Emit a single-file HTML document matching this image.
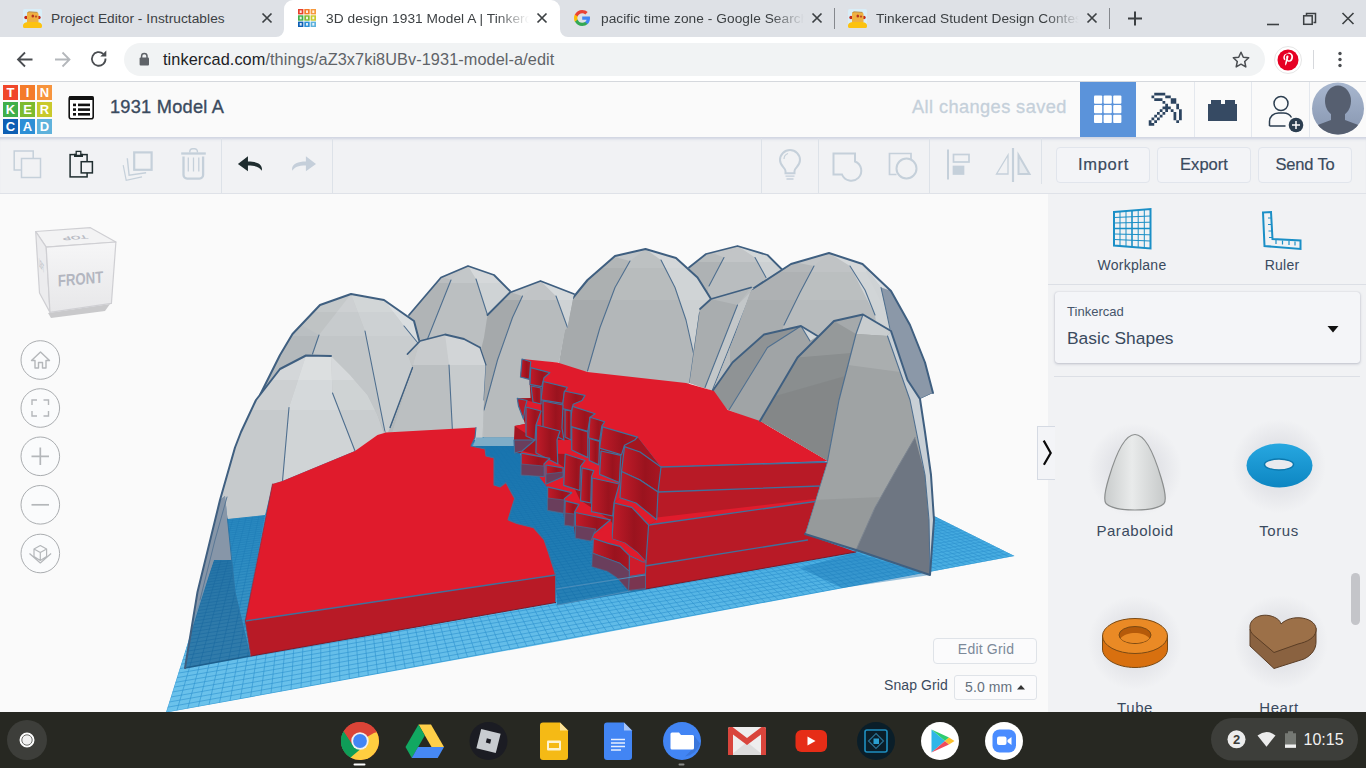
<!DOCTYPE html>
<html lang="en">
<head>
<meta charset="utf-8">
<title>3D design 1931 Model A | Tinkercad</title>
<style>
*{box-sizing:border-box;margin:0;padding:0}
html,body{width:1366px;height:768px;overflow:hidden;background:#fafafa;font-family:"Liberation Sans",sans-serif}
.abs{position:absolute}
#tabstrip{left:0;top:0;width:1366px;height:37px;background:#dee1e6}
#navbar{left:0;top:37px;width:1366px;height:45px;background:#fff;border-bottom:1px solid #d5d8dd}
.tabtxt{position:absolute;top:10.5px;font-size:13.7px;color:#3c4043;white-space:nowrap;overflow:hidden;letter-spacing:0.06px}
#omni{left:124px;top:43px;width:1141px;height:33px;border-radius:17px;background:#f1f3f4}
#url{left:163px;top:50px;font-size:16.3px;color:#5f6368;white-space:nowrap;letter-spacing:0.08px}
#url b{font-weight:normal;color:#202124}
#tkhead{left:0;top:82px;width:1366px;height:55px;background:#fafafa}
#tkbar{left:0;top:137px;width:1366px;height:57px;background:#f1f2f4;border-bottom:1px solid #dfe2e8;box-shadow:inset 0 4px 3px -2px rgba(176,184,208,.55)}
#view{left:0;top:194px;width:1048px;height:518px;background:#fafafa}
#panel{left:1048px;top:194px;width:318px;height:518px;background:#f1f2f4}
#shelf{left:0;top:712px;width:1366px;height:56px;background:#272822}
.tk{font-family:"Liberation Sans",sans-serif;color:#3a4a5e}
.btn{position:absolute;top:147px;width:94px;height:36px;border:1px solid #e1e5ec;border-radius:4px;background:#f3f4f7;font-size:16.5px;color:#3a4a5e;text-align:center;line-height:33px;-webkit-text-stroke:0.2px #3a4a5e}
.vsep{position:absolute;top:138px;width:1px;height:55px;background:#dde2e8}
.hsep{position:absolute;top:82px;width:1px;height:55px;background:#e4e8ee}
.logo i{position:absolute;width:15px;height:15px;font-style:normal;font-weight:bold;font-size:13px;line-height:15px;text-align:center;color:#fff}
.circ{position:absolute;left:21px;width:39px;height:39px;border-radius:50%;border:1px solid #b9bdc1;background:#fafbfc}
.lbl{position:absolute;font-size:14px;color:#3a4a5e;text-align:center;letter-spacing:0.25px;white-space:nowrap}
</style>
</head>
<body>
<!-- ===== browser tab strip ===== -->
<div id="tabstrip" class="abs"></div>
<div class="abs" style="left:284px;top:0;width:276px;height:37px;background:#fff;border-radius:9px 9px 0 0"></div>
<svg class="abs" style="left:276px;top:29px" width="8" height="8"><path d="M8 0 V8 H0 A8 8 0 0 0 8 0Z" fill="#fff"/></svg>
<svg class="abs" style="left:560px;top:29px" width="8" height="8"><path d="M0 0 V8 H8 A8 8 0 0 1 0 0Z" fill="#fff"/></svg>
<div class="tabtxt" style="left:51px;width:200px">Project Editor - Instructables</div>
<div class="tabtxt" style="left:326px;width:203px;-webkit-mask-image:linear-gradient(90deg,#000 170px,transparent 203px)">3D design 1931 Model A | Tinkercad</div>
<div class="tabtxt" style="left:601px;width:203px;-webkit-mask-image:linear-gradient(90deg,#000 170px,transparent 203px)">pacific time zone - Google Search</div>
<div class="tabtxt" style="left:876px;width:203px;-webkit-mask-image:linear-gradient(90deg,#000 170px,transparent 203px)">Tinkercad Student Design Contest</div>
<svg class="abs" style="left:0;top:0" width="1366" height="37" viewBox="0 0 1366 37">
  <!-- favicons -->
  <g id="robot1">
    <rect x="23" y="9" width="19" height="19" rx="1.500" fill="#d9eef8"/>
    <circle cx="26" cy="17.500" r="1.700" fill="#c2281c"/><circle cx="39" cy="17.500" r="1.700" fill="#c2281c"/>
    <path d="M27 13.500q0-1.500 1.500-1.500l8.500.600q1.500.100 1.500 1.600v7.800h-11.500z" fill="#efb042"/>
    <path d="M27.500 12.600l1.500-.800 8.500.600" stroke="#b07a25" stroke-width="0.800" fill="none"/>
    <ellipse cx="32.800" cy="16" rx="1.300" ry="1.600" fill="#b5331e"/><ellipse cx="36" cy="16.600" rx="1.200" ry="1.100" fill="#c0502a"/>
    <path d="M23 25.500q0-3 4.500-3.500h10q4.500.500 4.500 3.500v1a1.500 1.500 0 0 1-1.500 1.500h-16a1.500 1.500 0 0 1-1.500-1.500z" fill="#fcc210"/>
  </g>
  <use href="#robot1" x="825"/>
  <g>
    <rect x="298" y="9" width="5.4" height="5.4" fill="#e8412c"/><rect x="304.3" y="9" width="5.4" height="5.4" fill="#f47b2b"/><rect x="310.6" y="9" width="5.4" height="5.4" fill="#f79a3e"/>
    <rect x="298" y="15.3" width="5.4" height="5.4" fill="#3fae49"/><rect x="304.3" y="15.3" width="5.4" height="5.4" fill="#7dbb2f"/><rect x="310.6" y="15.3" width="5.4" height="5.4" fill="#c9c92c"/>
    <rect x="298" y="21.6" width="5.4" height="5.4" fill="#0e5fb4"/><rect x="304.3" y="21.6" width="5.4" height="5.4" fill="#2d8fd6"/><rect x="310.6" y="21.6" width="5.4" height="5.4" fill="#5fb2dc"/>
    <rect x="299.7" y="10.4" width="2" height="2.600" fill="#fff" opacity="0.85"/><rect x="306.0" y="10.4" width="2" height="2.600" fill="#fff" opacity="0.85"/><rect x="312.3" y="10.4" width="2" height="2.600" fill="#fff" opacity="0.85"/><rect x="299.7" y="16.7" width="2" height="2.600" fill="#fff" opacity="0.85"/><rect x="306.0" y="16.7" width="2" height="2.600" fill="#fff" opacity="0.85"/><rect x="312.3" y="16.7" width="2" height="2.600" fill="#fff" opacity="0.85"/><rect x="299.7" y="23.0" width="2" height="2.600" fill="#fff" opacity="0.85"/><rect x="306.0" y="23.0" width="2" height="2.600" fill="#fff" opacity="0.85"/><rect x="312.3" y="23.0" width="2" height="2.600" fill="#fff" opacity="0.85"/>
  </g>
  <g transform="translate(574,10)">
    <path d="M16 8.2c0-.6-.05-1.1-.15-1.6H8.2v3.1h4.4c-.2 1-.77 1.85-1.63 2.42v2h2.63C15.14 12.7 16 10.65 16 8.2z" fill="#4285f4"/>
    <path d="M8.2 16c2.2 0 4.05-.73 5.4-1.98l-2.63-2c-.73.5-1.67.78-2.77.78-2.13 0-3.93-1.44-4.58-3.37H.9v2.1C2.25 14.2 5 16 8.2 16z" fill="#34a853"/>
    <path d="M3.62 9.43c-.16-.5-.26-1-.26-1.53s.1-1.04.26-1.53v-2.1H.9C.33 5.4 0 6.66 0 8s.33 2.6.9 3.73l2.72-2.3z" fill="#fbbc05"/>
    <path d="M8.2 3.2c1.2 0 2.28.4 3.13 1.22l2.34-2.34C12.25.75 10.4 0 8.2 0 5 0 2.25 1.8.9 4.47l2.72 2.1C4.27 4.64 6.07 3.2 8.2 3.2z" fill="#ea4335"/>
  </g>
  <!-- close x -->
  <g stroke="#3c4043" stroke-width="1.7" fill="none">
    <path d="M262.5 13.5l9 9m0-9l-9 9"/><path d="M537.5 13.5l9 9m0-9l-9 9"/><path d="M812.5 13.5l9 9m0-9l-9 9"/><path d="M1087.5 13.5l9 9m0-9l-9 9"/>
  </g>
  <!-- tab separators -->
  <rect x="834" y="8" width="1" height="21" fill="#85888d"/><rect x="1109" y="8" width="1" height="21" fill="#85888d"/>
  <!-- new tab plus -->
  <path d="M1128 18.5h14M1135 11.5v14" stroke="#3c4043" stroke-width="2" fill="none"/>
  <!-- window controls -->
  <path d="M1267 24.5h12" stroke="#3c4043" stroke-width="1.6" fill="none"/>
  <path d="M1306.5 15.5v-2h9v9h-2" stroke="#3c4043" stroke-width="1.5" fill="none"/>
  <rect x="1303.700" y="15.800" width="8.500" height="8.500" stroke="#3c4043" stroke-width="1.500" fill="none"/>
  <path d="M1342.500 13l11 11m0-11l-11 11" stroke="#3c4043" stroke-width="1.6" fill="none"/>
</svg>
<!-- ===== nav bar ===== -->
<div id="navbar" class="abs"></div>
<div id="omni" class="abs"></div>
<div id="url" class="abs"><b>tinkercad.com</b>/things/aZ3x7ki8UBv-1931-model-a/edit</div>
<svg class="abs" style="left:0;top:37px" width="1366" height="45" viewBox="0 37 1366 45">
  <path d="M32.500 59.500H18.500M25 52.500l-7 7 7 7" stroke="#4a4d51" stroke-width="1.800" fill="none"/>
  <path d="M55 59.500h14M62.500 52.500l7 7-7 7" stroke="#b4b7bb" stroke-width="1.800" fill="none"/>
  <path d="M105.500 58.500a6.800 6.800 0 1 1-2.200-4.600" stroke="#4a4d51" stroke-width="1.800" fill="none"/>
  <path d="M106.300 50.500v6h-6z" fill="#4a4d51"/>
  <rect x="139.600" y="57.600" width="9.400" height="7.800" rx="1" fill="#5f6368"/>
  <path d="M141.600 58v-1.900a2.700 2.700 0 0 1 5.400 0v1.900" stroke="#5f6368" stroke-width="1.500" fill="none"/>
  <path d="M1241 52.200l2.300 5 5.400.6-4 3.700 1.100 5.400-4.800-2.700-4.800 2.700 1.100-5.400-4-3.700 5.400-.6z" stroke="#4a4d51" stroke-width="1.500" fill="none" stroke-linejoin="round"/>
  <circle cx="1288" cy="60" r="13.500" fill="#fff" stroke="#e6e6e6" stroke-width="1"/>
  <circle cx="1288" cy="60" r="10.500" fill="#e60023"/>
  <path d="M1288.300 53.200c-3.300 0-5 2.200-5 4.300 0 1.200.5 2.300 1.500 2.700.2.100.3 0 .4-.2l.2-.7c0-.2 0-.3-.1-.5-.3-.4-.5-.9-.5-1.600 0-2 1.500-3.400 3.500-3.400 1.900 0 3 1.200 3 2.800 0 2.100-.9 3.900-2.300 3.900-.8 0-1.300-.6-1.100-1.400.2-.9.600-1.900.6-2.600 0-.6-.3-1.100-1-1.100-.8 0-1.400.8-1.400 1.900 0 .7.200 1.200.2 1.200l-1 4.100c-.3 1.200 0 2.700 0 2.800 0 .1.100.1.200 0 .1-.1 1-1.300 1.300-2.500l.5-2c.3.500 1 .9 1.800.9 2.400 0 4-2.200 4-5.100 0-2.200-1.900-4.200-4.800-4.200z" fill="#fff"/>
  <rect x="1313" y="50" width="1" height="19" fill="#d6d8dc"/>
  <circle cx="1340" cy="53.500" r="1.700" fill="#4a4d51"/><circle cx="1340" cy="59.500" r="1.700" fill="#4a4d51"/><circle cx="1340" cy="65.500" r="1.700" fill="#4a4d51"/>
</svg>
<!-- ===== tinkercad header ===== -->
<div id="tkhead" class="abs"></div>
<div class="abs logo" style="left:3px;top:85px;width:49px;height:49px">
  <i style="left:0;top:0;background:#f0462a">T</i><i style="left:17px;top:0;background:#f47b2b">I</i><i style="left:34px;top:0;background:#f7943e">N</i>
  <i style="left:0;top:17px;background:#3fae49">K</i><i style="left:17px;top:17px;background:#7dbb2f">E</i><i style="left:34px;top:17px;background:#c9c92c">R</i>
  <i style="left:0;top:34px;background:#0e5fb4">C</i><i style="left:17px;top:34px;background:#2d8fd6">A</i><i style="left:34px;top:34px;background:#5fb2dc">D</i>
</div>
<svg class="abs" style="left:66px;top:94px" width="30" height="28" viewBox="66 94 30 28">
  <rect x="69.200" y="96.900" width="24" height="21.800" rx="2" fill="#fff" stroke="#111" stroke-width="1.600"/>
  <rect x="69" y="96.300" width="24.500" height="3.700" fill="#111"/>
  <rect x="73" y="103.600" width="3" height="2.600" fill="#111"/><rect x="78" y="103.600" width="12" height="2.600" fill="#111"/>
  <rect x="73" y="108.300" width="3" height="2.600" fill="#111"/><rect x="78" y="108.300" width="12" height="2.600" fill="#111"/>
  <rect x="73" y="113" width="3" height="2.600" fill="#111"/><rect x="78" y="113" width="12" height="2.600" fill="#111"/>
</svg>
<div class="abs tk" style="left:110px;top:97px;font-size:18.2px;letter-spacing:0.25px;white-space:nowrap;-webkit-text-stroke:0.35px #3a4a5e">1931 Model A</div>
<div class="abs" style="left:912px;top:97px;font-size:18.2px;letter-spacing:0.42px;color:#c5d0da;white-space:nowrap;-webkit-text-stroke:0.3px #c5d0da">All changes saved</div>
<div class="abs" style="left:1080px;top:82px;width:56px;height:55px;background:#5b93da"></div>
<div class="hsep" style="left:1194px"></div><div class="hsep" style="left:1251px"></div><div class="hsep" style="left:1309px"></div>
<svg class="abs" style="left:1080px;top:82px" width="286" height="55" viewBox="1080 82 286 55">
  <g fill="#fff">
    <rect x="1094" y="95.500" width="8.200" height="8.200" rx="1"/><rect x="1103.600" y="95.500" width="8.200" height="8.200" rx="1"/><rect x="1113.200" y="95.500" width="8.200" height="8.200" rx="1"/>
    <rect x="1094" y="105.100" width="8.200" height="8.200" rx="1"/><rect x="1103.600" y="105.100" width="8.200" height="8.200" rx="1"/><rect x="1113.200" y="105.100" width="8.200" height="8.200" rx="1"/>
    <rect x="1094" y="114.700" width="8.200" height="8.200" rx="1"/><rect x="1103.600" y="114.700" width="8.200" height="8.200" rx="1"/><rect x="1113.200" y="114.700" width="8.200" height="8.200" rx="1"/>
  </g>
  <!-- pickaxe -->
  <path d="M1154.25 92.77h2.75v2.75h-2.75zM1157.00 92.77h2.75v2.75h-2.75zM1159.76 92.77h2.75v2.75h-2.75zM1162.51 92.77h2.75v2.75h-2.75zM1151.49 95.52h2.75v2.75h-2.75zM1165.26 95.52h2.75v2.75h-2.75zM1168.02 95.52h2.75v2.75h-2.75zM1154.25 98.28h2.75v2.75h-2.75zM1157.00 98.28h2.75v2.75h-2.75zM1159.76 98.28h2.75v2.75h-2.75zM1170.77 98.28h2.75v2.75h-2.75zM1173.53 98.28h2.75v2.75h-2.75zM1162.51 101.03h2.75v2.75h-2.75zM1170.77 101.03h2.75v2.75h-2.75zM1173.53 101.03h2.75v2.75h-2.75zM1165.26 103.79h2.75v2.75h-2.75zM1176.28 103.79h2.75v2.75h-2.75zM1162.51 106.54h2.75v2.75h-2.75zM1165.26 106.54h2.75v2.75h-2.75zM1168.02 106.54h2.75v2.75h-2.75zM1176.28 106.54h2.75v2.75h-2.75zM1159.76 109.29h2.75v2.75h-2.75zM1165.26 109.29h2.75v2.75h-2.75zM1170.77 109.29h2.75v2.75h-2.75zM1179.03 109.29h2.75v2.75h-2.75zM1157.00 112.05h2.75v2.75h-2.75zM1162.51 112.05h2.75v2.75h-2.75zM1173.53 112.05h2.75v2.75h-2.75zM1179.03 112.05h2.75v2.75h-2.75zM1154.25 114.80h2.75v2.75h-2.75zM1159.76 114.80h2.75v2.75h-2.75zM1173.53 114.80h2.75v2.75h-2.75zM1179.03 114.80h2.75v2.75h-2.75zM1151.49 117.56h2.75v2.75h-2.75zM1157.00 117.56h2.75v2.75h-2.75zM1173.53 117.56h2.75v2.75h-2.75zM1179.03 117.56h2.75v2.75h-2.75zM1148.74 120.31h2.75v2.75h-2.75zM1154.25 120.31h2.75v2.75h-2.75zM1176.28 120.31h2.75v2.75h-2.75zM1148.74 123.06h2.75v2.75h-2.75zM1151.49 123.06h2.75v2.75h-2.75z" fill="#2c4460"/>
  <!-- brick -->
  <path d="M1208 121V104h3v-4h10v4h4v-4h10v4h2v17z" fill="#364a63"/>
  <!-- person + -->
  <circle cx="1281" cy="103.500" r="7" stroke="#2c3e50" stroke-width="1.500" fill="none"/>
  <path d="M1269.500 126v-4.500c0-5 4-8.500 9-8.500h5c3.500 0 6.500 1.800 8 4.500" stroke="#2c3e50" stroke-width="1.500" fill="none"/>
  <path d="M1269.500 126h16" stroke="#2c3e50" stroke-width="1.500"/>
  <circle cx="1296" cy="125" r="7.300" fill="#2c3e50"/>
  <path d="M1292 125h8M1296 121v8" stroke="#fff" stroke-width="1.500"/>
  <!-- avatar -->
  <defs><clipPath id="avc"><circle cx="1338" cy="108.500" r="26"/></clipPath>
  <linearGradient id="avg" x1="0" y1="0" x2="0" y2="1"><stop offset="0" stop-color="#a8b7cf"/><stop offset="1" stop-color="#8796b0"/></linearGradient></defs>
  <circle cx="1338" cy="108.500" r="26" fill="url(#avg)"/>
  <g clip-path="url(#avc)" fill="#565f70">
    <ellipse cx="1338" cy="101" rx="13" ry="15.500"/>
    <path d="M1331 110h14v10l16 6v12h-46v-12l16-6z"/>
  </g>
</svg>
<!-- ===== tinkercad toolbar ===== -->
<div id="tkbar" class="abs"></div>
<div class="vsep" style="left:221px"></div><div class="vsep" style="left:332px"></div>
<div class="vsep" style="left:761px"></div><div class="vsep" style="left:818px"></div><div class="vsep" style="left:929px"></div><div class="vsep" style="left:1041px;height:46px"></div>
<svg class="abs" style="left:0;top:138px" width="1048" height="55" viewBox="0 138 1048 55">
  <g stroke="#c5d0da" fill="none" stroke-width="1.500">
    <rect x="14.200" y="151" width="19" height="19"/><rect x="21.500" y="158.500" width="19" height="19" fill="#f1f2f4"/>
    <!-- duplicate -->
    <path d="M123.200 165.200l3 15.200 15.800-3.500" stroke-width="1.200"/><path d="M127.300 158.200l1.800 16.900 17-2.300" stroke-width="1.400"/>
    <rect x="134.200" y="152.400" width="17.400" height="17.400" fill="#f1f2f4" stroke-width="2.200"/>
    <!-- trash -->
    <path d="M181.200 153.500h24.600" stroke-width="2.300"/><path d="M189.800 152.500v-1a2.800 2.800 0 0 1 2.800-2.800h2a2.800 2.800 0 0 1 2.800 2.800v1" stroke-width="1.400"/>
    <path d="M183.500 156.500v18.500a3.600 3.600 0 0 0 3.600 3.600h12.400a3.600 3.600 0 0 0 3.600-3.600v-18.500" stroke-width="2.300"/>
    <path d="M188.300 157.500v14M193.500 157.500v14M198.800 157.500v14" stroke-width="1.300"/>
  </g>
  <!-- paste -->
  <g stroke="#1f2d2f" fill="none" stroke-width="1.500">
    <rect x="70.100" y="154.600" width="17" height="22.300"/>
    <rect x="74" y="153.800" width="9" height="3.200" fill="#1f2d2f" stroke="none"/>
    <rect x="76.200" y="151.400" width="4.600" height="4" fill="#f1f2f4" stroke-width="1.300"/>
    <rect x="81.200" y="161.700" width="11.200" height="11.200" fill="#f1f2f4"/>
  </g>
  <!-- undo -->
  <path d="M237.900 163.900L247.950 156.300V161.500C256 161.500 261.500 163.500 262 169L261.600 170.800C259.500 167 256 165.600 247.950 165.500V171.200Z" fill="#1f2d2f"/>
  <path d="M316 163.900L305.900 156.300V161.500C298 161.500 292.500 163.500 292 169L292.400 170.800C294.500 167 298 165.600 305.900 165.500V171.200Z" fill="#c5cfda"/>
  <g stroke="#c5d0da" fill="none" stroke-width="2">
    <!-- bulb -->
    <path d="M785.500 173.300v-2.300c0-3-5.500-5-5.500-11a10 10 0 0 1 20 0c0 6-5.500 8-5.500 11v2.300z" />
    <path d="M785.500 176.200h9M786.500 179h7" stroke-width="1.300"/>
    <path d="M784 159a6 6 0 0 1 4-5.500" stroke-width="1.200"/>
    <!-- group -->
    <path d="M855 153.500h-21.500v21h8.500a10 10 0 1 0 13-13z" />
    <!-- ungroup -->
    <path d="M911 160v-6.500h-21.500v21h7" stroke-width="1.700"/><circle cx="906.500" cy="168.500" r="10"/>
    <!-- align -->
    <path d="M948 149.500v30" /><rect x="953.500" y="154.500" width="15.500" height="7.500" stroke-width="1.700"/><rect x="953.500" y="166.500" width="10" height="7.500" fill="#c5d0da" stroke-width="1.700"/>
    <!-- mirror -->
    <path d="M1013 148v34" stroke-width="2.200"/><path d="M1008 155v19h-11.500z" stroke-width="1.300"/><path d="M1018.500 155v19h11z" stroke-width="2" fill="#e6eaee"/>
  </g>
</svg>
<div class="btn" style="left:1056px;letter-spacing:0.73px;padding-left:1px">Import</div><div class="btn" style="left:1157px;letter-spacing:0.03px">Export</div><div class="btn" style="left:1258px;letter-spacing:-0.2px">Send To</div>
<!-- ===== viewport ===== -->
<div id="view" class="abs"></div>
<!--SCENE-START-->
<svg class="abs" style="left:0;top:194px" width="1048" height="518" viewBox="0 194 1048 518">
<clipPath id="cwp"><polygon points="166,712.5 560,641 1014.5,556 701,400 251.6,440"/></clipPath>
<defs><linearGradient id="wpg" gradientUnits="userSpaceOnUse" x1="0" y1="712" x2="0" y2="430"><stop offset="0" stop-color="#6cc3ec"/><stop offset="0.3" stop-color="#62bce8"/><stop offset="0.55" stop-color="#48ade1"/><stop offset="1" stop-color="#3399d6"/></linearGradient></defs>
<polygon points="166,712.5 560,641 1014.5,556 701,400 251.6,440" fill="url(#wpg)" />
<path clip-path="url(#cwp)" d="M166 712.5L251.6 440M166 712.5L1014.5 556M176.9 710.5L256.4 439.6M167.7 707.2L1009.4 553.5M187.7 708.5L261.2 439.1M169.3 702L1004.4 551M198.4 706.5L266 438.7M170.9 697L999.5 548.5M209 704.6L270.7 438.3M172.4 692L994.6 546.1M219.5 702.6L275.5 437.9M174 687.1L989.8 543.7M230 700.7L280.2 437.5M175.5 682.4L985.1 541.4M240.3 698.8L284.9 437M176.9 677.7L980.4 539M250.6 696.9L289.6 436.6M178.4 673.1L975.8 536.8M260.8 695L294.3 436.2M179.8 668.6L971.3 534.5M271 693.1L298.9 435.8M181.2 664.2L966.8 532.3M281.1 691.3L303.6 435.4M182.5 659.9L962.4 530.1M291 689.4L308.2 435M183.8 655.7L958.1 527.9M301 687.6L312.8 434.6M185.2 651.5L953.8 525.8M310.8 685.8L317.4 434.1M186.4 647.4L949.5 523.7M320.6 684L322 433.7M187.7 643.4L945.4 521.6M330.3 682.2L326.5 433.3M188.9 639.5L941.2 519.5M339.9 680.4L331.1 432.9M190.1 635.6L937.2 517.5M349.4 678.7L335.6 432.5M191.3 631.9L933.2 515.5M358.9 676.9L340.1 432.1M192.5 628.1L929.2 513.6M368.3 675.2L344.6 431.7M193.7 624.5L925.3 511.6M377.7 673.5L349.1 431.3M194.8 620.9L921.4 509.7M386.9 671.7L353.6 430.9M195.9 617.3L917.6 507.8M396.2 670L358 430.5M197 613.9L913.8 505.9M405.3 668.4L362.5 430.1M198.1 610.5L910.1 504.1M414.4 666.7L366.9 429.7M199.1 607.1L906.5 502.2M423.4 665L371.3 429.3M200.1 603.8L902.8 500.4M432.3 663.4L375.7 429M201.2 600.5L899.3 498.7M441.2 661.7L380 428.6M202.2 597.4L895.7 496.9M450.1 660.1L384.4 428.2M203.2 594.2L892.2 495.2M458.8 658.5L388.8 427.8M204.1 591.1L888.8 493.4M467.5 656.9L393.1 427.4M205.1 588.1L885.4 491.7M476.2 655.3L397.4 427M206 585.1L882 490.1M484.7 653.7L401.7 426.6M206.9 582.1L878.7 488.4M493.3 652.1L406 426.3M207.9 579.3L875.4 486.8M501.7 650.6L410.3 425.9M208.8 576.4L872.1 485.2M510.1 649L414.5 425.5M209.6 573.6L868.9 483.6M518.5 647.5L418.8 425.1M210.5 570.8L865.8 482M526.8 646L423 424.7M211.4 568.1L862.6 480.4M535 644.4L427.2 424.4M212.2 565.4L859.5 478.9M543.2 642.9L431.4 424M213 562.8L856.5 477.4M551.3 641.4L435.6 423.6M213.9 560.2L853.4 475.9M559.3 640L439.8 423.3M214.7 557.6L850.4 474.4M567.4 638.5L443.9 422.9M215.5 555.1L847.5 472.9M575.3 637L448.1 422.5M216.2 552.6L844.5 471.4M583.2 635.5L452.2 422.1M217 550.1L841.6 470M591.1 634.1L456.3 421.8M217.8 547.7L838.8 468.6M598.9 632.7L460.4 421.4M218.5 545.3L835.9 467.2M606.6 631.2L464.5 421M219.3 543L833.1 465.8M614.3 629.8L468.6 420.7M220 540.6L830.4 464.4M622 628.4L472.7 420.3M220.7 538.4L827.6 463M629.6 627L476.7 420M221.4 536.1L824.9 461.7M637.1 625.6L480.8 419.6M222.1 533.9L822.2 460.3M644.6 624.2L484.8 419.2M222.8 531.7L819.6 459M652 622.9L488.8 418.9M223.5 529.5L817 457.7M659.4 621.5L492.8 418.5M224.1 527.4L814.4 456.4M666.8 620.1L496.8 418.2M224.8 525.3L811.8 455.1M674.1 618.8L500.8 417.8M225.5 523.2L809.2 453.9M681.4 617.4L504.7 417.5M226.1 521.2L806.7 452.6M688.6 616.1L508.7 417.1M226.7 519.1L804.2 451.4M695.7 614.8L512.6 416.8M227.4 517.1L801.8 450.1M702.9 613.5L516.5 416.4M228 515.2L799.3 448.9M709.9 612.2L520.4 416.1M228.6 513.2L796.9 447.7M717 610.9L524.3 415.7M229.2 511.3L794.5 446.5M724 609.6L528.2 415.4M229.8 509.4L792.1 445.4M730.9 608.3L532.1 415M230.4 507.5L789.8 444.2M737.8 607L535.9 414.7M231 505.7L787.5 443M744.7 605.8L539.8 414.3M231.5 503.8L785.2 441.9M751.5 604.5L543.6 414M232.1 502L782.9 440.8M758.2 603.3L547.4 413.7M232.7 500.3L780.6 439.6M765 602L551.2 413.3M233.2 498.5L778.4 438.5M771.7 600.8L555 413M233.8 496.8L776.2 437.4M778.3 599.6L558.8 412.7M234.3 495L774 436.3M784.9 598.3L562.6 412.3M234.8 493.3L771.8 435.3M791.5 597.1L566.4 412M235.4 491.7L769.7 434.2M798 595.9L570.1 411.6M235.9 490L767.6 433.1M804.5 594.7L573.9 411.3M236.4 488.4L765.5 432.1M811 593.5L577.6 411M236.9 486.7L763.4 431M817.4 592.4L581.3 410.7M237.4 485.1L761.3 430M823.7 591.2L585 410.3M237.9 483.6L759.3 429M830.1 590L588.7 410M238.4 482L757.2 428M836.4 588.9L592.4 409.7M238.9 480.5L755.2 427M842.6 587.7L596 409.3M239.4 478.9L753.2 426M848.9 586.6L599.7 409M239.8 477.4L751.3 425M855 585.4L603.3 408.7M240.3 475.9L749.3 424M861.2 584.3L607 408.4M240.8 474.4L747.4 423.1M867.3 583.2L610.6 408M241.2 473L745.5 422.1M873.4 582L614.2 407.7M241.7 471.5L743.5 421.2M879.4 580.9L617.8 407.4M242.1 470.1L741.7 420.2M885.4 579.8L621.4 407.1M242.6 468.7L739.8 419.3M891.4 578.7L625 406.8M243 467.3L737.9 418.4M897.3 577.6L628.5 406.4M243.5 465.9L736.1 417.5M903.2 576.5L632.1 406.1M243.9 464.6L734.3 416.6M909.1 575.4L635.6 405.8M244.3 463.2L732.5 415.7M914.9 574.4L639.2 405.5M244.7 461.9L730.7 414.8M920.7 573.3L642.7 405.2M245.1 460.5L728.9 413.9M926.5 572.2L646.2 404.9M245.6 459.2L727.2 413M932.2 571.2L649.7 404.6M246 457.9L725.4 412.2M937.9 570.1L653.2 404.3M246.4 456.6L723.7 411.3M943.6 569.1L656.7 403.9M246.8 455.4L722 410.4M949.2 568L660.2 403.6M247.2 454.1L720.3 409.6M954.9 567L663.6 403.3M247.6 452.9L718.6 408.8M960.4 566L667.1 403M247.9 451.6L716.9 407.9M966 565L670.5 402.7M248.3 450.4L715.3 407.1M971.5 563.9L673.9 402.4M248.7 449.2L713.6 406.3M977 562.9L677.4 402.1M249.1 448L712 405.5M982.4 561.9L680.8 401.8M249.4 446.8L710.4 404.7M987.8 560.9L684.2 401.5M249.8 445.7L708.8 403.9M993.2 559.9L687.6 401.2M250.2 444.5L707.2 403.1M998.6 558.9L690.9 400.9M250.5 443.4L705.6 402.3M1003.9 558L694.3 400.6M250.9 442.2L704.1 401.5M1009.2 557L697.7 400.3M251.3 441.1L702.5 400.8M1014.5 556L701 400M251.6 440L701 400" stroke="#2f93cf" stroke-width="1" fill="none" opacity="0.62"/>
<polygon points="464,425 524,425 520,455 545,470 575,500 600,530 645,566 645,590 557,605 555,575 540,535 505,520 494,485 480,455" fill="#0a5f97" opacity="0.62"/>
<polygon points="800,568 855,552.5 930,575 842,588" fill="#1876b4" opacity="0.45"/>
<clipPath id="c1"><polygon points="689,267.5 706,254 737.5,246 767.5,255 782.5,270 800,330 690,330"/></clipPath>
<g clip-path="url(#c1)">
<polygon points="689,267.5 706,254 737.5,246 767.5,255 782.5,270 800,330 690,330" fill="#b9bdbf" />
<polygon points="680,240 724,257.5 709,286 700,330 680,330" fill="#aeb2b4" />
<polygon points="724,257.5 737.5,246 755,257.5 766,277.5 780,330 700,330 709,286" fill="#b9bdbf" />
<polygon points="737.5,246 767.5,255 790,270 800,330 780,330 766,277.5 755,257.5" fill="#cdd1d3" />
<polygon points="680,240 800,240 800,262 680,262" fill="#ffffff" opacity="0.13"/>
<polyline points="724,257.5 709,286" fill="none" stroke="#4f6f8f" stroke-width="1.1" stroke-linejoin="round" stroke-linecap="round" />
<polyline points="755,257.5 766,277.5" fill="none" stroke="#4f6f8f" stroke-width="1.1" stroke-linejoin="round" stroke-linecap="round" />
</g>
<polyline points="689,267.5 706,254 737.5,246 767.5,255 782.5,270" fill="none" stroke="#3f5f80" stroke-width="1.8" stroke-linejoin="round" stroke-linecap="round" />
<clipPath id="c2"><polygon points="405,320 409,315 441,277.5 468,266 494,275 510,291 520,375 405,375"/></clipPath>
<g clip-path="url(#c2)">
<polygon points="405,320 409,315 441,277.5 468,266 494,275 510,291 520,375 405,375" fill="#b9bdbf" />
<polygon points="400,260 451,280 427.5,339 415,380 400,380" fill="#b0b4b6" />
<polygon points="451,280 468,266 476,279 487.5,315 500,380 415,380 427.5,339" fill="#bbbfc1" />
<polygon points="468,266 494,275 515,291 525,380 500,380 487.5,315 476,279" fill="#cfd3d5" />
<polygon points="400,260 520,260 520,283 400,283" fill="#ffffff" opacity="0.13"/>
<polyline points="451,280 427.5,339" fill="none" stroke="#4f6f8f" stroke-width="1.1" stroke-linejoin="round" stroke-linecap="round" />
<polyline points="476,279 487.5,315" fill="none" stroke="#4f6f8f" stroke-width="1.1" stroke-linejoin="round" stroke-linecap="round" />
</g>
<polyline points="409,315 441,277.5 468,266 494,275 510,291" fill="none" stroke="#3f5f80" stroke-width="1.8" stroke-linejoin="round" stroke-linecap="round" />
<clipPath id="c3"><polygon points="752.5,289 791,264 829,253 862.5,264 891,291 910,325 925,362.5 933,393 920,399 880,420 700,420 735,310"/></clipPath>
<g clip-path="url(#c3)">
<polygon points="752.5,289 791,264 829,253 862.5,264 891,291 910,325 925,362.5 933,393 920,399 880,420 700,420 735,310" fill="#b9bdbf" />
<polygon points="730,250 814,266 784,325 760,420 730,420" fill="#a9adaf" />
<polygon points="814,266 829,253 850,266 875,315 890,420 760,420 784,325" fill="#b7bbbd" />
<polygon points="829,253 862.5,264 881,287.5 886,310 890,329 900,420 890,420 875,315 850,266" fill="#cfd3d5" />
<polygon points="862.5,264 891,291 881,287.5" fill="#d9dde0" />
<polygon points="881,287.5 891,291 910,325 925,362.5 933,393 920,399 907.5,380 891,331 886,310" fill="#8b98a8" />
<polygon points="730,250 880,250 866,272 730,272" fill="#ffffff" opacity="0.13"/>
<polygon points="730,272 866,272 880,300 730,300" fill="#ffffff" opacity="0.06"/>
<polyline points="814,266 800,292.5 784,325" fill="none" stroke="#4f6f8f" stroke-width="1.1" stroke-linejoin="round" stroke-linecap="round" />
<polyline points="850,266 865,290 875,315" fill="none" stroke="#4f6f8f" stroke-width="1.1" stroke-linejoin="round" stroke-linecap="round" />
<polyline points="881,287.5 886,310 890,329" fill="none" stroke="#4f6f8f" stroke-width="1.1" stroke-linejoin="round" stroke-linecap="round" />
<polyline points="920,399 933,393" fill="none" stroke="#4f6f8f" stroke-width="1.1" stroke-linejoin="round" stroke-linecap="round" />
</g>
<polyline points="752.5,289 791,264 829,253 862.5,264 891,291 910,325 925,362.5 933,393" fill="none" stroke="#3f5f80" stroke-width="2" stroke-linejoin="round" stroke-linecap="round" />
<clipPath id="c4"><polygon points="260,395 280,355 292.5,334 320,305 351,294 384,300 414,321 419,340 425,440 250,440"/></clipPath>
<g clip-path="url(#c4)">
<polygon points="260,395 280,355 292.5,334 320,305 351,294 384,300 414,321 419,340 425,440 250,440" fill="#b9bdbf" />
<polygon points="240,290 319,335 312.5,354 290,440 240,440" fill="#b4b9bc" />
<polygon points="319,335 351,294 365,331 385,432 290,440 312.5,354" fill="#c2c6c8" />
<polygon points="351,294 384,300 404,326 417.5,342.5 425,440 385,432 365,331" fill="#c9cdcf" />
<polygon points="384,300 414,321 419,340 417.5,342.5 404,326" fill="#d6dadc" />
<polygon points="240,290 430,290 430,312 240,312" fill="#ffffff" opacity="0.18"/>
<polygon points="240,312 430,312 430,336 240,336" fill="#ffffff" opacity="0.09"/>
<polyline points="319,335 312.5,354" fill="none" stroke="#4f6f8f" stroke-width="1.1" stroke-linejoin="round" stroke-linecap="round" />
<polyline points="365,331 385,432" fill="none" stroke="#4f6f8f" stroke-width="1.1" stroke-linejoin="round" stroke-linecap="round" />
<polyline points="404,326 417.5,342.5" fill="none" stroke="#4f6f8f" stroke-width="1.1" stroke-linejoin="round" stroke-linecap="round" />
</g>
<polyline points="260,395 280,355 292.5,334 320,305 351,294 384,300 414,321 419,340" fill="none" stroke="#3f5f80" stroke-width="2" stroke-linejoin="round" stroke-linecap="round" />
<clipPath id="c5"><polygon points="565,307.5 587.5,280 615,256 645.5,249 676,258 697.5,277.5 711,299 700,309 689,382.5 690,390 555,380 559,362.5 565,327.5"/></clipPath>
<g clip-path="url(#c5)">
<polygon points="565,307.5 587.5,280 615,256 645.5,249 676,258 697.5,277.5 711,299 700,309 689,382.5 690,390 555,380 559,362.5 565,327.5" fill="#b9bdbf" />
<polygon points="550,240 630,261 615,287.5 600,327.5 587.5,371 550,380" fill="#a6aaac" />
<polygon points="630,261 645.5,249 661,260 675,287.5 686,320 695,360 690,390 587.5,371 600,327.5 615,287.5" fill="#b3b7b9" />
<polygon points="645.5,249 676,258 697.5,277.5 711,299 700,309 695,360 686,320 675,287.5 661,260" fill="#cdd1d3" />
<polygon points="550,240 720,240 720,268 550,268" fill="#ffffff" opacity="0.14"/>
<polygon points="550,268 720,268 720,300 550,300" fill="#ffffff" opacity="0.07"/>
<polyline points="630,261 615,287.5 600,327.5 587.5,371" fill="none" stroke="#4f6f8f" stroke-width="1.1" stroke-linejoin="round" stroke-linecap="round" />
<polyline points="661,260 675,287.5 686,320 695,360" fill="none" stroke="#4f6f8f" stroke-width="1.1" stroke-linejoin="round" stroke-linecap="round" />
</g>
<polyline points="565,307.5 587.5,280 615,256 645.5,249 676,258 697.5,277.5 711,299" fill="none" stroke="#3f5f80" stroke-width="2" stroke-linejoin="round" stroke-linecap="round" />
<clipPath id="c6"><polygon points="700,309 711,299 751,287.5 754,288 750,292.5 735,335 712.5,391 689,383 699,312.5"/></clipPath>
<g clip-path="url(#c6)">
<polygon points="700,309 711,299 751,287.5 754,288 750,292.5 735,335 712.5,391 689,383 699,312.5" fill="#b9bdbf" />
<polygon points="690,280 737.5,305 705,387.5 685,390" fill="#a9adaf" />
<polygon points="737.5,305 752.5,290 735,335 712.5,391 705,387.5" fill="#c3c7c9" />
<polygon points="711,299 751,287.5 737.5,305" fill="#b4b8ba" />
<polyline points="737.5,305 705,387.5" fill="none" stroke="#4f6f8f" stroke-width="1.1" stroke-linejoin="round" stroke-linecap="round" />
<polyline points="752.5,290 712.5,390" fill="none" stroke="#4f6f8f" stroke-width="1.1" stroke-linejoin="round" stroke-linecap="round" />
<polyline points="699,312.5 689,382.5" fill="none" stroke="#4f6f8f" stroke-width="1.1" stroke-linejoin="round" stroke-linecap="round" />
</g>
<polyline points="700,309 711,299 751,287.5" fill="none" stroke="#3f5f80" stroke-width="1.8" stroke-linejoin="round" stroke-linecap="round" />
<clipPath id="c7"><polygon points="487.5,315 510,292.5 540.5,281 574,294 567.5,327.5 565,330 559,362.5 533,361 533,437.5 472,437.5 474,400 478,365 481,350 484,337.5"/></clipPath>
<g clip-path="url(#c7)">
<polygon points="487.5,315 510,292.5 540.5,281 574,294 567.5,327.5 565,330 559,362.5 533,361 533,437.5 472,437.5 474,400 478,365 481,350 484,337.5" fill="#b9bdbf" />
<polygon points="470,280 522.5,296 512.5,317.5 497.5,360 484,410 470,440" fill="#a5a9ab" />
<polygon points="522.5,296 540.5,281 556,296 567.5,327.5 559,365 535,440 484,440 484,410 497.5,360 512.5,317.5" fill="#b7bbbd" />
<polygon points="540.5,281 574,294 567.5,327.5 556,296" fill="#cfd3d5" />
<polygon points="470,280 580,280 580,300 470,300" fill="#ffffff" opacity="0.14"/>
<polyline points="522.5,296 512.5,317.5 497.5,360 484,410" fill="none" stroke="#4f6f8f" stroke-width="1.1" stroke-linejoin="round" stroke-linecap="round" />
<polyline points="556,296 567.5,327.5" fill="none" stroke="#4f6f8f" stroke-width="1.1" stroke-linejoin="round" stroke-linecap="round" />
</g>
<polyline points="487.5,315 510,292.5 540.5,281 574,294" fill="none" stroke="#3f5f80" stroke-width="1.8" stroke-linejoin="round" stroke-linecap="round" />
<clipPath id="c8"><polygon points="712.5,391 732.5,362.5 764,334.5 801,326 817.5,336 800,360 765,425 727.5,410"/></clipPath>
<g clip-path="url(#c8)">
<polygon points="712.5,391 732.5,362.5 764,334.5 801,326 817.5,336 800,360 765,425 727.5,410" fill="#b9bdbf" />
<polygon points="700,330 801,326 767.5,347.5 729,410 700,400" fill="#8f9395" />
<polygon points="801,326 817.5,336 800,360 765,425 729,410 767.5,347.5" fill="#a0a4a6" />
<polygon points="801,326 817.5,336 810,341" fill="#d2d6d8" />
<polyline points="801,326 767.5,347.5 729,410" fill="none" stroke="#4f6f8f" stroke-width="1.1" stroke-linejoin="round" stroke-linecap="round" />
<polyline points="801,326 810,341" fill="none" stroke="#4f6f8f" stroke-width="1.1" stroke-linejoin="round" stroke-linecap="round" />
</g>
<polyline points="712.5,391 732.5,362.5 764,334.5 801,326 817.5,336" fill="none" stroke="#3f5f80" stroke-width="1.8" stroke-linejoin="round" stroke-linecap="round" />
<clipPath id="c9"><polygon points="390,427.5 412.5,367.5 407.5,354 420,341 445,334.5 464,339 480,347.5 486,365 484,400 482.5,440 385,440"/></clipPath>
<g clip-path="url(#c9)">
<polygon points="390,427.5 412.5,367.5 407.5,354 420,341 445,334.5 464,339 480,347.5 486,365 484,400 482.5,440 385,440" fill="#b9bdbf" />
<polygon points="380,330 420,341 412.5,367.5 390,440 380,440" fill="#b4b8ba" />
<polygon points="420,341 445,334.5 449,365 452.5,440 390,440 412.5,367.5" fill="#bbbfc1" />
<polygon points="445,334.5 464,339 480,347.5 486,365 484,400 482.5,440 452.5,440 449,365" fill="#c7cbcd" />
<polygon points="380,330 490,330 490,365 380,365" fill="#ffffff" opacity="0.2"/>
<polyline points="449,365 452.5,432" fill="none" stroke="#4f6f8f" stroke-width="1.1" stroke-linejoin="round" stroke-linecap="round" />
<polyline points="412.5,367.5 390,427.5" fill="none" stroke="#4f6f8f" stroke-width="1.1" stroke-linejoin="round" stroke-linecap="round" />
<polyline points="486,365 484,400" fill="none" stroke="#4f6f8f" stroke-width="1.1" stroke-linejoin="round" stroke-linecap="round" />
</g>
<polyline points="407.5,354 420,341 445,334.5 464,339 480,347.5" fill="none" stroke="#3f5f80" stroke-width="1.8" stroke-linejoin="round" stroke-linecap="round" />
<polyline points="390,427.5 412.5,367.5" fill="none" stroke="#3f5f80" stroke-width="1.3" stroke-linejoin="round" stroke-linecap="round" />
<polyline points="480,347.5 486,365" fill="none" stroke="#3f5f80" stroke-width="1.2" stroke-linejoin="round" stroke-linecap="round" />
<clipPath id="c10"><polygon points="197.5,592 220,500 235,447.5 241,432 256,400 280,369 306,355.5 331,356 350,375 367.5,395 377.5,415 385,432 386,440 355,451 282.5,481 272.5,484 265,515 227.5,519 225,496"/></clipPath>
<g clip-path="url(#c10)">
<polygon points="197.5,592 220,500 235,447.5 241,432 256,400 280,369 306,355.5 331,356 350,375 367.5,395 377.5,415 385,432 386,440 355,451 282.5,481 272.5,484 265,515 227.5,519 225,496" fill="#b9bdbf" />
<polygon points="190,350 306,355.5 289,407.5 282.5,481 265,515 190,600" fill="#c6cacc" />
<polygon points="306,355.5 331,356 332.5,393 355,451 282.5,481 289,407.5" fill="#d0d4d6" />
<polygon points="331,356 350,375 367.5,395 377.5,415 386,440 355,451 332.5,393" fill="#c9cdcf" />
<polygon points="190,350 390,350 390,380 190,380" fill="#ffffff" opacity="0.25"/>
<polygon points="190,380 390,380 390,410 190,410" fill="#ffffff" opacity="0.12"/>
<polyline points="289,407.5 282.5,481" fill="none" stroke="#4f6f8f" stroke-width="1.1" stroke-linejoin="round" stroke-linecap="round" />
<polyline points="332.5,393 355,451" fill="none" stroke="#4f6f8f" stroke-width="1.1" stroke-linejoin="round" stroke-linecap="round" />
</g>
<polygon points="225,496 227.5,519 235,592 250,656 185,668 197.5,592 220,500" fill="#0d4f80" opacity="0.6"/>
<polygon points="227.5,519 265,515 251,592 250,656 235,592" fill="#0a5f97" opacity="0.42"/>
<polygon points="225,496 227.5,519 232,560 214,560 192.5,622 197.5,592 220,500" fill="#8796a8" />
<polyline points="185,668 250,656" fill="none" stroke="#1d5f8d" stroke-width="1.5" stroke-linejoin="round" stroke-linecap="round" />
<polyline points="227.5,519 235,592 250,656" fill="none" stroke="#2a74a6" stroke-width="1" stroke-linejoin="round" stroke-linecap="round" />
<polyline points="185,668 197.5,592 220,500 235,447.5 241,432 256,400 280,369 306,355.5 331,356" fill="none" stroke="#3f5f80" stroke-width="2" stroke-linejoin="round" stroke-linecap="round" />
<polyline points="227,497 215,540 200,600" fill="none" stroke="#5a7896" stroke-width="1" stroke-linejoin="round" stroke-linecap="round" />
<polygon points="476,437.5 516,437.5 516,446 473,446" fill="#7eadc8" />
<polygon points="522,359 557.5,362.5 587.5,372 686,383 714,391 727.5,410 760,421 828,461 661,467 637.6,437.1 602.5,427 572.5,406.4 543.2,381.5" fill="#e01b2c" />
<polygon points="661,467 831,462 805,534 856,552 645.5,589 645,566 648.6,525 656.7,519.8 658,492" fill="#b81a26" />
<polyline points="661,467 831,462" fill="none" stroke="#41709b" stroke-width="1.3" stroke-linejoin="round" stroke-linecap="round" />
<polyline points="658,492 820,486" fill="none" stroke="#41709b" stroke-width="1.3" stroke-linejoin="round" stroke-linecap="round" />
<polygon points="656.7,517.5 815,499 815,501.5 648.6,525" fill="#e01b2c" />
<polyline points="648.6,525 815,501.5" fill="none" stroke="#41709b" stroke-width="1.3" stroke-linejoin="round" stroke-linecap="round" />
<polyline points="645,566 807.5,540" fill="none" stroke="#41709b" stroke-width="1.3" stroke-linejoin="round" stroke-linecap="round" />
<polyline points="645.5,589 856,552" fill="none" stroke="#7a1a2a" stroke-width="1" stroke-linejoin="round" stroke-linecap="round" />
<polygon points="522,359 543.2,381.5 572.5,406.4 602.5,427 637.6,437.1 661,467 658,492 656.7,519.8 648.6,525 645,566 645.5,589 628.5,590.5 616.9,577.5 607.5,571.25 591.9,566.6 593.4,538.4 590.8,541 575.4,538 574,526.4 564.4,525 563.7,513.2 547.6,510.3 547.6,486.9 546,484 544,476.6 521.2,475 521.2,453.2 514.6,453 514,440 514.6,426 525,424 523.5,419 518.5,406 517.3,398.3 530.5,398 529.5,379.5 520.5,377" fill="#a31520" />
<defs><linearGradient id="wg" x1="0" y1="0" x2="1" y2="0"><stop offset="0" stop-color="#c21b29"/><stop offset="0.6" stop-color="#9a131e"/><stop offset="1" stop-color="#a81622"/></linearGradient></defs>
<polygon points="527,400.5 541,404 541,440 536,440 514.6,426 525,424 526,408" fill="#e01b2c" />
<polygon points="541,440 571,440 571,450 588,457 599,465 620,471 621,497 614,503 592,478 580,466 565,454 536,453" fill="#e01b2c" />
<polygon points="514,440 535,440 522,451 550,458 565,468 580,500 610,520 626,542 592,540 575,512 547,487 521,453" fill="#e01b2c" />
<polygon points="620,497.8 636,503 656.7,519.8 648.6,525 631.8,507.3 614.2,503" fill="#e01b2c" />
<polygon points="522,359 530.7,361.7 529.3,379.3 520.5,377" fill="url(#wg)" stroke="#41709b" stroke-width="1.2" stroke-linejoin="round" />
<polygon points="530.7,367.6 549.8,372.7 544,377.8 541.7,386.6 530,384.4" fill="url(#wg)" stroke="#41709b" stroke-width="1.2" stroke-linejoin="round" />
<polygon points="543.2,381.5 567.3,387.3 564.4,392.5 563,403.4 541,399.8" fill="url(#wg)" stroke="#41709b" stroke-width="1.2" stroke-linejoin="round" />
<polygon points="564.4,391 585,395.4 582,400.5 573.2,404.2 571.7,410.8 562.2,408.6" fill="url(#wg)" stroke="#41709b" stroke-width="1.2" stroke-linejoin="round" />
<polygon points="572.5,406.4 595.2,413.7 590,417.3 587.8,431.3 569.5,426.1" fill="url(#wg)" stroke="#41709b" stroke-width="1.2" stroke-linejoin="round" />
<polygon points="590,417.3 604.7,421.7 601.8,426.1 599.6,440.8 588.6,437.8" fill="url(#wg)" stroke="#41709b" stroke-width="1.2" stroke-linejoin="round" />
<polygon points="602.5,426.9 637.6,437.1 634.7,440 624.5,445.2 621.5,454.7 599.6,448.1" fill="url(#wg)" stroke="#41709b" stroke-width="1.2" stroke-linejoin="round" />
<polygon points="531,386 541,388 541,404 533,402" fill="url(#wg)" stroke="#41709b" stroke-width="1.2" stroke-linejoin="round" />
<polygon points="517.3,398.3 527,400.5 525,408 523.5,419 518.5,406" fill="#b81a26" stroke="#41709b" stroke-width="1.2" stroke-linejoin="round" />
<polygon points="526,407 541,411 536,425 535,440 526,436" fill="url(#wg)" stroke="#41709b" stroke-width="1.2" stroke-linejoin="round" />
<polygon points="543,401 563,405 562,428 564,440 543,430" fill="url(#wg)" stroke="#41709b" stroke-width="1.2" stroke-linejoin="round" />
<polygon points="536.6,425 560,431 557,440 557.8,464 535.9,453" fill="url(#wg)" stroke="#41709b" stroke-width="1.2" stroke-linejoin="round" />
<polygon points="565,410 571,411 571,440 565,437" fill="url(#wg)" stroke="#41709b" stroke-width="1.2" stroke-linejoin="round" />
<polygon points="571.7,427 587.8,432 587.8,457.6 571.7,450" fill="url(#wg)" stroke="#41709b" stroke-width="1.2" stroke-linejoin="round" />
<polygon points="589.3,438.5 599.6,441.5 598.8,464.9 589.3,460.5" fill="url(#wg)" stroke="#41709b" stroke-width="1.2" stroke-linejoin="round" />
<polygon points="601,451 620.8,455.4 619.3,482.5 599.6,474.4" fill="url(#wg)" stroke="#41709b" stroke-width="1.2" stroke-linejoin="round" />
<polygon points="624.5,446.6 640,452 661,467 658,492 640,480 621.5,471.5" fill="url(#wg)" stroke="#41709b" stroke-width="1.2" stroke-linejoin="round" />
<polygon points="621.5,471.5 640,480 658,492 656.7,519.8 636,503 620,497.8" fill="url(#wg)" stroke="#41709b" stroke-width="1.2" stroke-linejoin="round" />
<polygon points="614.2,503 631.8,507.3 648.6,525 646,562 637.2,552.5 624.7,543 612,539" fill="url(#wg)" stroke="#41709b" stroke-width="1.2" stroke-linejoin="round" />
<polygon points="565.2,454 585,460.5 580.5,466.4 579.8,490.5 563.7,485.4" fill="url(#wg)" stroke="#41709b" stroke-width="1.2" stroke-linejoin="round" />
<polygon points="582,467.8 593.7,470.7 591.5,476.6 590.8,503 580.5,500.8" fill="url(#wg)" stroke="#41709b" stroke-width="1.2" stroke-linejoin="round" />
<polygon points="592.2,478 619.3,484 614,503 612.7,516 591.5,511.7" fill="url(#wg)" stroke="#41709b" stroke-width="1.2" stroke-linejoin="round" />
<polygon points="514,440 535,440 522,451 514.6,453" fill="#6a3e5c" stroke="#41709b" stroke-width="1.2" stroke-linejoin="round" />
<polygon points="521.2,453.2 549.8,458.3 544,464 544,476.6 521.2,475" fill="url(#wg)" stroke="#41709b" stroke-width="1.2" stroke-linejoin="round" />
<polygon points="521.2,464 544,466 544,476.6 521.2,475" fill="#6a3e5c" stroke="#41709b" stroke-width="0.6" stroke-linejoin="round" />
<polygon points="546,465 563,467.8 563,476.6 546,484" fill="url(#wg)" stroke="#41709b" stroke-width="1.2" stroke-linejoin="round" />
<polygon points="546,474 563,472 563,476.6 546,484" fill="#6a3e5c" stroke="#41709b" stroke-width="0.6" stroke-linejoin="round" />
<polygon points="547.6,486.9 571.7,492.7 564.4,498.6 563.7,513.2 547.6,510.3" fill="url(#wg)" stroke="#41709b" stroke-width="1.2" stroke-linejoin="round" />
<polygon points="547.6,498 564.4,500 563.7,513.2 547.6,510.3" fill="#6a3e5c" stroke="#41709b" stroke-width="0.6" stroke-linejoin="round" />
<polygon points="565.2,500.8 579,504.4 574.7,511.7 574,526.4 564.4,525" fill="url(#wg)" stroke="#41709b" stroke-width="1.2" stroke-linejoin="round" />
<polygon points="565,513 574.7,514 574,526.4 564.4,525" fill="#6a3e5c" stroke="#41709b" stroke-width="0.6" stroke-linejoin="round" />
<polygon points="575.4,512.5 610.5,519.8 593.7,533.7 590.8,541 575.4,538" fill="url(#wg)" stroke="#41709b" stroke-width="1.2" stroke-linejoin="round" />
<polygon points="575.4,525.7 596,529 593.7,533.7 590.8,541 575.4,538" fill="#6a3e5c" stroke="#41709b" stroke-width="0.6" stroke-linejoin="round" />
<polygon points="593.4,538.4 599.7,531.4 610.6,527.5 612,539 624.7,543 637.2,552.5 646,562 642.7,562 629.4,555.6 620,546.3 607.5,543.1" fill="#e01b2c" />
<polygon points="593.4,538.4 607.5,543.1 620,546.3 629.4,555.6 629.4,571.5 620,563.4 607.5,558.75 592.7,553.3" fill="url(#wg)" stroke="#41709b" stroke-width="1.2" stroke-linejoin="round" />
<polygon points="592.7,553.3 607.5,558.75 620,563.4 629.4,571.5 628.5,590.5 616.9,577.5 607.5,571.25 591.9,566.6" fill="#6a3e5c" stroke="#41709b" stroke-width="0.6" stroke-linejoin="round" />
<polygon points="629.4,555.6 642.7,561.9 646,562 645.5,574 629.4,576.5" fill="#cf1c2b" stroke="#41709b" stroke-width="1" stroke-linejoin="round" />
<polygon points="629.4,576.5 645.5,574 645.5,588.5 628.5,590.5" fill="#7a3550" stroke="#41709b" stroke-width="0.8" stroke-linejoin="round" />
<polyline points="556,589 645,575" fill="none" stroke="#4c8dba" stroke-width="1.2" stroke-linejoin="round" stroke-linecap="round" />
<polyline points="557.5,605 630,591" fill="none" stroke="#4c8dba" stroke-width="1.2" stroke-linejoin="round" stroke-linecap="round" />
<clipPath id="ck"><polygon points="760,421 797.5,357.5 834,321 863,314.5 891,331 907.5,380 920,399 925,432 931,475 934,520 930,575 856,550 805,534 827.5,461"/></clipPath><g clip-path="url(#ck)">
<polygon points="760,421 797.5,357.5 834,321 863,314.5 891,331 907.5,380 920,399 925,432 931,475 934,520 930,575 856,550 805,534 827.5,461" fill="#9fa3a4" />
<polygon points="760,421 797.5,357.5 834,321 863,314.5 856,334 839,400 827.5,461" fill="#8a8e8f" />
<polygon points="797.5,357.5 834,321 863,314.5 856,334 851,353" fill="#ffffff" opacity="0.1"/>
<polygon points="775,396 845,376 839,400 827.5,461 760,421" fill="#000000" opacity="0.045"/>
<polygon points="834,321 863,314.5 856,334" fill="#a5a9ab" />
<polygon points="863,314.5 891,331 887.5,336 856,334" fill="#c9cdcf" />
<polygon points="856,334 887.5,336 905,385 915,437.5 897.5,467.5 875,507.5 856,550 805,534 827.5,461 839,400" fill="#9fa3a4" />
<polygon points="856,334 887.5,336 900,372 848,365" fill="#ffffff" opacity="0.12"/>
<polygon points="805,534 812,500 880,497 856,550" fill="#000000" opacity="0.05"/>
<polygon points="915,437.5 897.5,467.5 875,507.5 856,550 930,575 929,520 925,475" fill="#6e7682" />
<polygon points="887.5,336 891,331 907.5,380 920,399 925,432 931,475 934,520 930,575 929,520 925,475 917.5,437.5 910,400" fill="#c9d0d6" />
<polyline points="863,314.5 856,334 839,400 827.5,461 805,534" fill="none" stroke="#4f6f8f" stroke-width="1.2" stroke-linejoin="round" stroke-linecap="round" />
<polyline points="887.5,336 910,400 917.5,437.5 925,475 929,520 930,572" fill="none" stroke="#4f6f8f" stroke-width="1.1" stroke-linejoin="round" stroke-linecap="round" />
<polyline points="915,437.5 897.5,467.5 875,507.5 856,550" fill="none" stroke="#7c8590" stroke-width="1" stroke-linejoin="round" stroke-linecap="round" />
</g>
<polyline points="760,421 797.5,357.5 834,321 863,314.5 891,331 907.5,380 920,399 925,432 931,475 934,520 930,575 856,550 805,534" fill="none" stroke="#3f5f80" stroke-width="2" stroke-linejoin="round" stroke-linecap="round" />
<polygon points="272.5,484 282.5,481 355,451 377.5,435 386,432.5 476,427.5 475,437.5 471,446 485,449 486,456 494,458 494,485 500,487 506,482.5 514.6,498.6 508,519.8 516.8,523.5 533.7,527.8 544,539.6 548.3,552 555.6,575 245.4,621" fill="#e01b2c" />
<polygon points="245.4,621 555.6,575 555.6,602.5 251,656" fill="#b81a26" />
<polyline points="245.4,621 555.6,575" fill="none" stroke="#41709b" stroke-width="1.3" stroke-linejoin="round" stroke-linecap="round" />
<polyline points="555.6,575 555.6,602.5" fill="none" stroke="#41709b" stroke-width="1" stroke-linejoin="round" stroke-linecap="round" />
<polyline points="476,427.5 475,437.5 471,446 485,449 486,456 494,458 494,485 500,487 506,482.5 514.6,498.6 508,519.8 516.8,523.5 533.7,527.8 544,539.6 548.3,552 555.6,575" fill="none" stroke="#41709b" stroke-width="1.1" stroke-linejoin="round" stroke-linecap="round" />
<polyline points="251,656 555.6,602.5" fill="none" stroke="#7a1a2a" stroke-width="1" stroke-linejoin="round" stroke-linecap="round" />
<polyline points="272.5,484 245.4,621 251,656" fill="none" stroke="#9a2a3a" stroke-width="0.8" stroke-linejoin="round" stroke-linecap="round" />
</svg>
<!--SCENE-END-->
<!--CTRL-START-->
<svg class="abs" style="left:0;top:194px" width="160" height="400" viewBox="0 194 160 400">
  <defs><linearGradient id="cf" x1="0" y1="0" x2="0" y2="1"><stop offset="0" stop-color="#f6f6f7"/><stop offset="1" stop-color="#e7e7e9"/></linearGradient></defs>
  <polygon points="48,313 110,304 105,311 51,318" fill="#c9c9cb"/>
  <polygon points="35.700,231.500 90.400,227.700 115.900,242 46.200,247.200" fill="#f3f3f4" stroke="#cfcfd3" stroke-width="1.200" stroke-linejoin="round"/>
  <polygon points="35.700,231.500 46.200,247.200 50,312.400 39.500,293" fill="#ececee" stroke="#cfcfd3" stroke-width="1.200" stroke-linejoin="round"/>
  <polygon points="46.200,247.200 115.900,242 111.400,303.400 50,312.400" fill="url(#cf)" stroke="#cfcfd3" stroke-width="1.200" stroke-linejoin="round"/>
  <text transform="matrix(0.8 -0.07 0.02 1 58 286.500)" font-family="Liberation Sans, sans-serif" font-size="16.500" font-weight="bold" fill="#b3b6c0">FRONT</text>
  <text transform="matrix(-0.95 0.07 -0.25 -0.4 86.500 235)" font-family="Liberation Sans, sans-serif" font-size="13" font-weight="bold" fill="#b9bcc4">TOP</text>
  <text transform="matrix(0.16 0.24 0.06 1 39.300 266)" font-family="Liberation Sans, sans-serif" font-size="12" font-weight="bold" fill="#b9bcc4">LEFT</text>
  <g fill="#fafbfc" stroke="#aaadb0" stroke-width="1">
    <circle cx="40.300" cy="360" r="19.300"/><circle cx="40.300" cy="408" r="19.300"/><circle cx="40.300" cy="456.300" r="19.300"/><circle cx="40.300" cy="504.800" r="19.300"/><circle cx="40.300" cy="553.500" r="19.300"/>
  </g>
  <g fill="none" stroke="#b4b7ba" stroke-width="1.400">
    <path d="M31.500 360.500l9-8.500 9 8.500h-3.500v7.500h-3.500v-5.500h-4v5.500h-3.500v-7.500z" stroke-linejoin="round"/>
    <path d="M32 405v-5h5M43.500 400h5v5M48.500 411v5h-5M37 416h-5v-5"/>
    <path d="M31.500 456.300h17.500M40.300 447.500v17.500" stroke-width="1.700"/>
    <path d="M31.500 504.800h17.500" stroke-width="1.700"/>
    <path d="M34 549l6.300-3.500 6.300 3.500v7.500l-6.300 4-6.300-4zM34 549l6.300 3.500 6.300-3.500M40.300 552.500v8M29.500 553.500l10.800 9.500 10.800-9.500" stroke-linejoin="round" stroke-width="1.200"/>
  </g>
</svg>
<div class="abs" style="left:933px;top:638px;width:104px;height:26px;border:1px solid #dfe3e8;border-radius:4px;background:#fbfbfc;font-size:14px;color:#7b8999;text-align:center;line-height:20px;letter-spacing:0.2px;padding-left:2px">Edit Grid</div>
<div class="abs tk" style="left:884px;top:677px;font-size:14px;letter-spacing:0.1px;white-space:nowrap">Snap Grid</div>
<div class="abs" style="left:954px;top:675px;width:83px;height:25px;border:1px solid #dfe3e8;border-radius:3px;background:#fbfbfc;font-size:14px;color:#66727f;line-height:23px;padding-left:10px;letter-spacing:0.1px">5.0 mm</div>
<svg class="abs" style="left:1016px;top:683px" width="10" height="8"><path d="M1 6.500h8l-4-4.500z" fill="#333"/></svg>
<!--CTRL-END-->
<!-- ===== right panel ===== -->
<div id="panel" class="abs"></div>
<div class="abs" style="left:1048px;top:284px;width:318px;height:1px;background:#dcdfe5"></div>
<div class="abs" style="left:1055px;top:292px;width:305px;height:71px;background:#f4f5f8;border-radius:3px;box-shadow:0 1px 3px rgba(60,70,100,.28),0 0 1px rgba(60,70,100,.25)"></div>
<div class="abs" style="left:1054px;top:376px;width:306px;height:1px;background:#dcdfe5"></div>
<div class="abs tk" style="left:1067px;top:304px;font-size:13px;letter-spacing:0.02px;color:#46566b">Tinkercad</div>
<div class="abs tk" style="left:1067px;top:328px;font-size:17.4px;letter-spacing:0.02px">Basic Shapes</div>
<div class="lbl" style="left:1082px;width:100px;top:257px">Workplane</div>
<div class="lbl" style="left:1232px;width:100px;top:257px">Ruler</div>
<div class="lbl" style="left:1085px;width:100px;top:522px;font-size:15px;letter-spacing:0.55px">Paraboloid</div>
<div class="lbl" style="left:1229px;width:100px;top:522px;font-size:15px;letter-spacing:0.55px">Torus</div>
<div class="abs" style="left:1048px;top:690px;width:318px;height:22px;overflow:hidden">
<div class="lbl" style="left:37px;width:100px;top:9px;font-size:15px;letter-spacing:0.55px">Tube</div>
<div class="lbl" style="left:181px;width:100px;top:9px;font-size:15px;letter-spacing:0.55px">Heart</div>
</div>
<div class="abs" style="left:1351px;top:573px;width:9px;height:52px;border-radius:4.500px;background:#c4c5c9"></div>
<div class="abs" style="left:1037px;top:426px;width:18px;height:54px;background:#f3f4f7;border:1px solid #d5dae3;border-right:none"></div>
<svg class="abs" style="left:1037px;top:427px" width="20" height="52" viewBox="1037 427 20 52"><path d="M1043.700 440.600l7 12.400-6.800 11.800" stroke="#0a0a0a" stroke-width="2.200" fill="none"/></svg>
<svg class="abs" style="left:1048px;top:194px" width="318" height="518" viewBox="1048 194 318 518">
  <defs>
    <radialGradient id="halo"><stop offset="0.55" stop-color="#e4e5e9"/><stop offset="1" stop-color="#f1f2f4"/></radialGradient>
    <linearGradient id="pbg" x1="0" y1="0" x2="1" y2="0"><stop offset="0" stop-color="#c9cccc"/><stop offset="0.45" stop-color="#e9ebeb"/><stop offset="1" stop-color="#c6c9c9"/></linearGradient>
    <linearGradient id="trg" x1="0" y1="0" x2="0" y2="1"><stop offset="0" stop-color="#27a7e0"/><stop offset="1" stop-color="#0d86c2"/></linearGradient>
  </defs>
  <!-- workplane icon -->
  <g stroke="#1b8fc6" fill="none">
    <path d="M1114 212l36.500-3v39.500l-36.500-3z" stroke-width="2"/>
    <path d="M1132 210.500v36.500M1114 228.500l36.500 0" stroke-width="1.600"/>
    <path d="M1120 211.500v34.500M1126 211v35.500M1138.200 210v37.500M1144.300 209.500v38.500M1114 217.500l36.500-1.500M1114 223l36.500-.8M1114 234l36.500.8M1114 239.500l36.500 1.500" stroke-width="1"/>
  </g>
  <!-- ruler icon -->
  <g stroke="#1b8fc6" fill="none">
    <path d="M1263 212.500l8-.5 1.500 27 28 1.500v8.500l-36-3z" stroke-width="2"/>
    <path d="M1268 218h3.500M1268 224.500h3.500M1268.500 231h3.500M1269 237.500h3.500M1276 240v4M1282.500 240.500v4M1289 241v4M1295 241.500v4" stroke-width="1.200"/>
  </g>
  <path d="M1327.500 326h11l-5.500 6.500z" fill="#111"/>
  <!-- paraboloid -->
  <circle cx="1135" cy="470" r="47" fill="url(#halo)"/>
  <path d="M1135 434.500c9 0 18 16 26 43 4 13 6 22 3 26-5 5-17 6.500-29 6.500s-24-1.500-29-6.500c-3-4-1-13 3-26 8-27 17-43 26-43z" fill="url(#pbg)" stroke="#8b8e8e" stroke-width="1.200"/>
  <!-- torus -->
  <circle cx="1279" cy="466" r="47" fill="url(#halo)"/>
  <ellipse cx="1279.500" cy="465.500" rx="33" ry="22" fill="url(#trg)"/>
  <ellipse cx="1279" cy="464.500" rx="14.500" ry="5.500" fill="#e9eaee" stroke="#0b78ae" stroke-width="1.500"/>
  <!-- tube -->
  <circle cx="1135" cy="643" r="47" fill="url(#halo)"/>
  <path d="M1102.500 636v13c0 10 14.500 18.500 32.500 18.500s32.500-8.500 32.500-18.500v-13z" fill="#d8700f" stroke="#7a4a14" stroke-width="1"/>
  <ellipse cx="1135" cy="636" rx="32.500" ry="17.500" fill="#ea8a25" stroke="#7a4a14" stroke-width="1"/>
  <ellipse cx="1135" cy="635" rx="16" ry="8.500" fill="#b55a0a" stroke="#7a4a14" stroke-width="1"/>
  <path d="M1120.500 638.500c3-4 9-5.500 14.500-5.500s11.500 1.500 14.500 5.500c-3 3-9 4.500-14.500 4.500s-11.500-1.500-14.500-4.500z" fill="#ea8a25"/>
  <!-- heart -->
  <circle cx="1281" cy="642" r="47" fill="url(#halo)"/>
  <path d="M1250 629v17l24 22.500 30-9.500c8-4 12-10 12-17v-14z" fill="#8a6240" stroke="#5a3d25" stroke-width="1"/>
  <path d="M1250 628c-1-9 10-15 21-12 5 1.500 9 4 10 8 5-5 13-7 21-6 10 1.500 15 7 14 13-1 7-9 11-18 13l-24 8.500-20-17c-3-2.500-4-5-4-7.500z" fill="#9c7048" stroke="#5a3d25" stroke-width="1"/>
</svg>

<!-- ===== shelf ===== -->
<div id="shelf" class="abs"></div>
<svg class="abs" style="left:0;top:712px" width="1366" height="56" viewBox="0 712 1366 56">
  <circle cx="27" cy="740" r="20" fill="#3d3e3a"/>
  <circle cx="27" cy="740" r="6.200" fill="#f1f1f1" stroke="#fff" stroke-width="2.600"/><circle cx="27" cy="740" r="5.200" fill="none" stroke="#6b6c69" stroke-width="1"/>
  <!-- chrome -->
  <g>
    <circle cx="360" cy="741" r="19" fill="#db4437"/>
    <path d="M360 741L343.550 731.500A19 19 0 0 0 350.500 757.450L360 741z" fill="#0f9d58"/>
    <path d="M360 741L350.500 757.450A19 19 0 0 0 376.450 731.500L360 741z" fill="#ffcd40"/>
    <path d="M360 741L350.500 757.450A19 19 0 0 1 343.550 731.500z" fill="#0f9d58"/>
    <path d="M360 732.500H376.800A19 19 0 0 0 343.550 731.500L352.500 745z" fill="#db4437"/>
    <path d="M352.600 745.300L343.550 731.500A19 19 0 0 0 350.500 757.450L360 749.500z" fill="#0f9d58"/>
    <circle cx="360" cy="741" r="8.700" fill="#f1f1f1"/><circle cx="360" cy="741" r="6.900" fill="#4285f4"/>
  </g>
  <rect x="353.500" y="763.500" width="12" height="2" rx="1" fill="#fff"/>
  <rect x="678.500" y="763.500" width="6" height="2" rx="1" fill="#8a8b88"/>
  <!-- drive -->
  <path d="M418.500 724.500h12.500l13 22.500h-12.500z" fill="#ffcf48"/>
  <path d="M418.500 724.500l-13 22.500 6.300 11 13-22.500z" fill="#11a861"/>
  <path d="M418 747h26l-6.300 11h-26z" fill="#4688f4"/>
  <!-- roblox -->
  <circle cx="488.500" cy="741" r="19" fill="#1b1c23"/>
  <g transform="rotate(14 488.500 741)"><rect x="478.500" y="731" width="20" height="20" fill="#c8ccd0"/><rect x="486.300" y="738.800" width="4.400" height="4.400" fill="#1b1c23"/></g>
  <!-- slides -->
  <path d="M543 722.500h17l8 8v26.500a3 3 0 0 1-3 3h-22a3 3 0 0 1-3-3v-31.500a3 3 0 0 1 3-3z" fill="#f5ba15"/>
  <path d="M560 722.500l8 8h-8z" fill="#fbe29a"/>
  <rect x="547" y="740.500" width="14" height="10" rx="1" fill="#fdf3d0"/><rect x="549" y="743" width="10" height="5" fill="#f5ba15"/>
  <!-- docs -->
  <path d="M607 722.500h17l8 8v26.500a3 3 0 0 1-3 3h-22a3 3 0 0 1-3-3v-31.500a3 3 0 0 1 3-3z" fill="#4285f4"/>
  <path d="M624 722.500l8 8h-8z" fill="#a6c5fa"/>
  <path d="M611 739.500h14M611 743h14M611 746.500h14M611 750h10" stroke="#e8f0fe" stroke-width="1.500"/>
  <!-- files -->
  <circle cx="682" cy="741" r="19" fill="#4285f4"/>
  <path d="M694 735.500v12l-9 9a19 19 0 0 0 15-13z" fill="#3a76da"/>
  <path d="M672 732.500h7l2 2.500h11.500a1.500 1.500 0 0 1 1.500 1.500v11.500a1.500 1.500 0 0 1-1.500 1.500h-20.500a1.500 1.500 0 0 1-1.500-1.500v-14a1.500 1.500 0 0 1 1.500-1.500z" fill="#fff"/>
  <!-- gmail -->
  <rect x="728" y="727" width="38" height="28" rx="2" fill="#eeeeee"/>
  <path d="M731 755l16-13 16 13z" fill="#dcdcdc"/>
  <path d="M728 729a2 2 0 0 1 2-2h2.500l14.500 11 14.500-11h2.500a2 2 0 0 1 2 2v26h-5v-20.500l-14 10.500-14-10.500v20.500h-5z" fill="#d9453c"/>
  <!-- youtube -->
  <rect x="795.500" y="730" width="31.500" height="22" rx="6" fill="#e62d17"/>
  <path d="M807.500 736.500v9l8-4.500z" fill="#fff"/>
  <!-- ps express -->
  <circle cx="876" cy="741" r="19" fill="#0a1e29"/>
  <rect x="865" y="730" width="22" height="22" rx="2" fill="none" stroke="#1f8fc0" stroke-width="1.600"/>
  <path d="M876 733.500l7.500 7.500-7.500 7.500-7.500-7.500z" fill="none" stroke="#2a6f90" stroke-width="1.200"/>
  <rect x="873.500" y="738.500" width="5.500" height="5.500" fill="#2a9fd0"/>
  <!-- play -->
  <circle cx="940" cy="741" r="19" fill="#fff"/>
  <path d="M931.500 729.500l13.500 11.500-13.500 11.500z" fill="#2fb6e8"/>
  <path d="M931.500 729.500l13.500 11.500 4-3.500z" fill="#2ecc71"/>
  <path d="M931.500 752.500l13.500-11.500 4 3.500z" fill="#ef4a5b"/>
  <path d="M949 737.500l5.500 3.500-5.500 3.500-4-3.500z" fill="#fbc02d"/>
  <!-- zoom -->
  <circle cx="1004" cy="741" r="19" fill="#fff"/>
  <rect x="992.500" y="729.500" width="23.500" height="23" rx="7" fill="#4a8cff"/>
  <rect x="997" y="736.500" width="9.500" height="8.500" rx="2" fill="#fff"/><path d="M1007.500 740l4-3v8l-4-3z" fill="#fff"/>
  <!-- status -->
  <rect x="1211" y="718" width="147" height="42.500" rx="21.200" fill="#3d3e3a"/>
  <circle cx="1236.500" cy="739.300" r="9" fill="#ececec"/>
  <path d="M1257.500 735.500q9-7 18 0l-9 11.200z" fill="#ececec"/>
  <path d="M1288 731.200h5v2h3v14.600h-11v-14.600h3z" fill="#757873"/><rect x="1285" y="744.500" width="11" height="3.300" fill="#f1f1f1"/>
  <text x="1236.500" y="743.800" font-family="Liberation Sans, sans-serif" font-size="13" font-weight="bold" fill="#3a3b37" text-anchor="middle">2</text>
  <text x="1303.500" y="745.200" font-family="Liberation Sans, sans-serif" font-size="16" fill="#f1f1f1">10:15</text>
</svg>

</body>
</html>
